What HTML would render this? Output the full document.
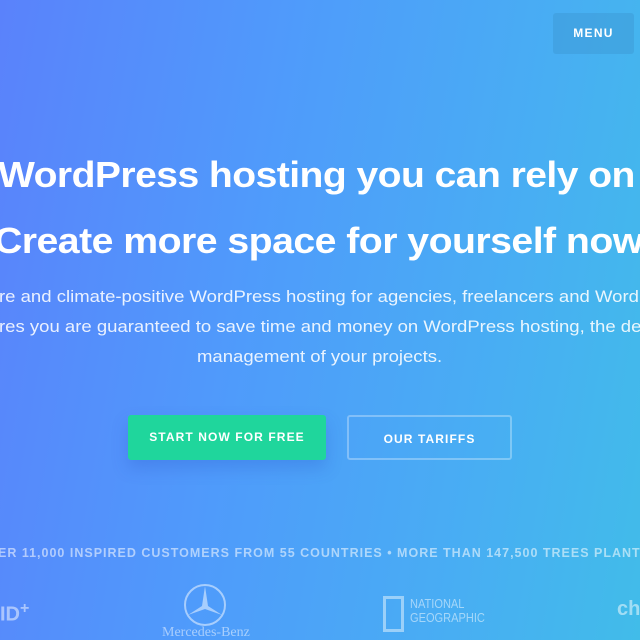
<!DOCTYPE html>
<html><head><style>
html,body{margin:0;padding:0;width:640px;height:640px;overflow:hidden}
body{font-family:"Liberation Sans",sans-serif;color:#fff}
#w{position:relative;width:640px;height:640px;overflow:hidden;background:linear-gradient(100deg,#5a82fb 0%,#4f9bfb 40%,#48aef3 75%,#41bce9 100%)}
.a{position:absolute;white-space:nowrap;transform-origin:0 0}
.menu{position:absolute;left:553px;top:13px;width:81px;height:41px;background:rgba(60,150,210,.45);border-radius:3px;font-weight:bold;font-size:12px;letter-spacing:1.3px;text-align:center;line-height:41px}
h1{margin:0;font-weight:bold;font-size:36px;letter-spacing:-0.5px}
.p{font-size:17px;color:rgba(255,255,255,.88)}
.btn{position:absolute;top:415px;height:45px;line-height:45px;text-align:center;font-weight:bold;font-size:12px;letter-spacing:1.1px;border-radius:3px;box-sizing:border-box}
.tag{font-size:12.5px;font-weight:bold;letter-spacing:1px;color:rgba(255,255,255,.55)}
.logo{position:absolute;color:rgba(255,255,255,.5)}
</style></head><body><div id="w">
<div class="menu">MENU</div>
<div class="a" style="left:-2px;top:154px"><h1 style="display:inline-block;transform:scaleX(1.085);transform-origin:0 0">WordPress hosting you can rely on</h1></div>
<div class="a" style="left:-6px;top:220px"><h1 style="display:inline-block;transform:scaleX(1.09);transform-origin:0 0">Create more space for yourself now</h1></div>
<div class="a p" style="left:-1px;top:287px;transform:scaleX(1.09)">re and climate-positive WordPress hosting for agencies, freelancers and WordPress</div>
<div class="a p" style="left:-1px;top:317px;transform:scaleX(1.09)">res you are guaranteed to save time and money on WordPress hosting, the development</div>
<div class="a p" style="left:197px;top:347px;transform:scaleX(1.09)">management of your projects.</div>
<div class="btn" style="left:128px;width:198px;background:#1fd69c;box-shadow:0 8px 16px rgba(40,80,200,.25)">START NOW FOR FREE</div>
<div class="btn" style="left:347px;width:165px;border:2px solid rgba(255,255,255,.3)">OUR TARIFFS</div>
<div class="a tag" style="left:-2px;top:546px">ER 11,000 INSPIRED CUSTOMERS FROM 55 COUNTRIES • MORE THAN 147,500 TREES PLANTED</div>
<div class="logo" style="left:0;top:600px;font-size:20px;font-weight:bold">ID<sup style="font-size:16px">+</sup></div>
<svg class="logo" style="left:182px;top:582px" width="46" height="46" viewBox="0 0 46 46"><circle cx="23" cy="23" r="20" fill="none" stroke="rgba(255,255,255,.5)" stroke-width="2"/><path d="M23 4 L26 24 L40 33 L23 27 L6 33 L20 24 Z" fill="rgba(255,255,255,.5)"/></svg>
<div class="logo" style="left:162px;top:625px;font-family:'Liberation Serif',serif;font-size:14px">Mercedes-Benz</div>
<div class="logo" style="left:383px;top:596px;width:15px;height:30px;border:3px solid rgba(255,255,255,.45)"></div>
<div class="logo" style="left:410px;top:597px;font-size:13px;line-height:14px;transform:scaleX(.85);transform-origin:0 0">NATIONAL<br>GEOGRAPHIC</div>
<div class="logo" style="left:617px;top:598px;font-size:20px;font-weight:bold">ch</div>
</div></body></html>
